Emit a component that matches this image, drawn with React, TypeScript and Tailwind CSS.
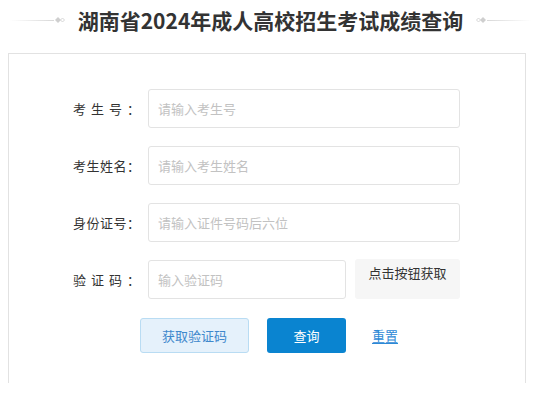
import React from "react"

const Ornament = ({ flip = false }: { flip?: boolean }) => (
  <svg width="12" height="8" viewBox="0 0 12 8" className={flip ? "-scale-x-100" : ""}>
    <path d="M1 4 L4 1 L7 4 L4 7 Z" fill="#cfcfcf" />
    <path d="M6.5 4 L8.5 2 L10.5 4 L8.5 6 Z" fill="none" stroke="#d6d6d6" strokeWidth="1" />
  </svg>
)

const fields = [
  { label: "考生号：", placeholder: "请输入考生号" },
  { label: "考生姓名：", placeholder: "请输入考生姓名" },
  { label: "身份证号：", placeholder: "请输入证件号码后六位" },
]

const App: React.FC = () => {
  return (
    <div className="w-[541px] h-[398px] bg-white font-['Noto_Sans_CJK_SC','Noto_Sans',sans-serif] text-[#333]">
      {/* TITLE */}
      <div className="h-[53px] flex items-start pt-[5px] px-[10px]">
        <div className="flex-1 flex items-center h-[30px]">
          <div className="flex-1 h-px bg-gradient-to-r from-transparent to-[#d8d8d8]" />
          <Ornament />
        </div>
        <h1 className="px-[12px] text-[21px] leading-[30px] font-bold text-[#333] whitespace-nowrap">湖南省2024年成人高校招生考试成绩查询</h1>
        <div className="flex-1 flex items-center h-[30px]">
          <Ornament flip />
          <div className="flex-1 h-px bg-gradient-to-l from-transparent to-[#d8d8d8]" />
        </div>
      </div>

      {/* FORM CARD */}
      <div className="ml-[8px] w-[518px] h-[330px] border border-b-0 border-[#e2e2e2] pt-[35px]">
        <div className="flex flex-col gap-[18px]">
          {fields.map((f) => (
            <div key={f.label} className="flex items-center">
              <label className="ml-[64px] w-[67px] text-[13px] [text-align-last:justify] text-[#333]">{f.label}</label>
              <input
                placeholder={f.placeholder}
                className="ml-[8px] w-[312px] h-[39px] rounded-[3px] border border-[#e3e3e3] px-[9px] text-[13px] placeholder:text-[#c2c2c2] outline-none"
              />
            </div>
          ))}

          {/* CAPTCHA ROW */}
          <div className="flex items-start">
            <label className="ml-[64px] w-[67px] h-[39px] leading-[39px] text-[13px] [text-align-last:justify] text-[#333]">验证码：</label>
            <input
              placeholder="输入验证码"
              className="ml-[8px] w-[198px] h-[39px] rounded-[3px] border border-[#e3e3e3] px-[9px] text-[13px] placeholder:text-[#c2c2c2] outline-none"
            />
            <div className="ml-[9px] -mt-px w-[105px] h-[40px] rounded-[3px] bg-[#f6f6f6] pt-[4px] text-center text-[13px] text-[#333]">点击按钮获取</div>
          </div>
        </div>

        {/* BUTTONS */}
        <div className="mt-[19px] ml-[131px] flex items-center">
          <button className="w-[109px] h-[35px] rounded-[3px] border border-[#b9dcf3] bg-[#e5f1fb] text-[13px] text-[#3f88cc]">获取验证码</button>
          <button className="ml-[18px] w-[79px] h-[35px] rounded-[3px] bg-[#0a84d0] text-[13px] text-white">查询</button>
          <a href="#" className="ml-[26px] text-[13px] text-[#2d89d6] underline underline-offset-2">重置</a>
        </div>
      </div>
    </div>
  )
}

export default App
